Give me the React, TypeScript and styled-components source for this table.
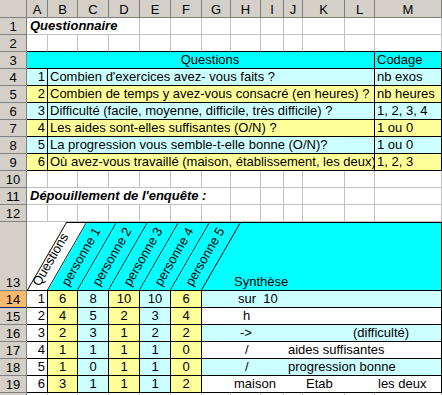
import styled, { createGlobalStyle } from "styled-components";

const CYAN = "#00ffff";
const LIGHT = "#ccffff";
const YELLOW = "#ffff99";
const WHITE = "#ffffff";
const GRID = "#c0c0c0";
const HEAD_BG = "#d4d0c8";
const HEAD_LINE = "#808080";

const COL_WIDTHS = [27, 21, 30, 31, 31, 31, 31, 29, 30, 23, 19, 42, 30, 67];
const LETTERS = ["A", "B", "C", "D", "E", "F", "G", "H", "I", "J", "K", "L", "M"];
const SYNTH_WIDTHS = COL_WIDTHS.slice(7);

const QUESTIONS = [
  { n: 1, text: "Combien d'exercices avez- vous faits ?", code: "nb exos", bg: LIGHT },
  { n: 2, text: "Combien de temps y avez-vous consacré (en heures) ?", code: "nb heures", bg: YELLOW },
  { n: 3, text: "Difficulté (facile, moyenne, difficile, très difficile) ?", code: "1, 2, 3, 4", bg: LIGHT },
  { n: 4, text: "Les aides sont-elles suffisantes (O/N) ?", code: "1 ou 0", bg: YELLOW },
  { n: 5, text: "La progression vous semble-t-elle bonne (O/N)?", code: "1 ou 0", bg: LIGHT },
  { n: 6, text: "Où avez-vous travaillé (maison, établissement, les deux)", code: "1, 2, 3", bg: YELLOW },
];

const PERSON_BG = [YELLOW, LIGHT, YELLOW, LIGHT, YELLOW];

type Piece = { col: number; pad: number; text: string };

const RESULTS: { values: number[]; bg: string; synth: Piece[] }[] = [
  { values: [6, 8, 10, 10, 6], bg: LIGHT, synth: [{ col: 2, pad: 7, text: "sur  10" }] },
  { values: [4, 5, 2, 3, 4], bg: WHITE, synth: [{ col: 2, pad: 12, text: "h" }] },
  {
    values: [2, 3, 1, 2, 2],
    bg: LIGHT,
    synth: [
      { col: 2, pad: 9, text: "->" },
      { col: 6, pad: 8, text: "(difficulté)" },
    ],
  },
  {
    values: [1, 1, 1, 1, 0],
    bg: WHITE,
    synth: [
      { col: 2, pad: 14, text: "/" },
      { col: 4, pad: 4, text: "aides suffisantes" },
    ],
  },
  {
    values: [1, 0, 1, 1, 0],
    bg: LIGHT,
    synth: [
      { col: 2, pad: 14, text: "/" },
      { col: 4, pad: 4, text: "progression bonne" },
    ],
  },
  {
    values: [3, 1, 1, 1, 2],
    bg: WHITE,
    synth: [
      { col: 2, pad: 3, text: "maison" },
      { col: 5, pad: 3, text: "Etab" },
      { col: 7, pad: 3, text: "les deux" },
    ],
  },
];

const GlobalStyle = createGlobalStyle`
  html, body {
    margin: 0;
    padding: 0;
    background: #ffffff;
    overflow: hidden;
  }
`;

const Sheet = styled.div`
  display: grid;
  grid-template-columns: ${COL_WIDTHS.map((w) => `${w}px`).join(" ")};
  grid-template-rows: 18px repeat(12, 17px) 69px repeat(7, 17px);
  font-family: "Liberation Sans", Arial, sans-serif;
  font-size: 13px;
  color: #000;
`;

const Corner = styled.div`
  box-sizing: border-box;
  background: ${HEAD_BG};
  border-right: 1px solid ${HEAD_LINE};
  border-bottom: 1px solid ${HEAD_LINE};
`;

const ColHead = styled.div`
  box-sizing: border-box;
  background: ${HEAD_BG};
  border-right: 1px solid ${HEAD_LINE};
  border-bottom: 1px solid ${HEAD_LINE};
  text-align: center;
  line-height: 17px;
  padding-top: 1px;
`;

const RowHead = styled.div<{ $active?: boolean }>`
  box-sizing: border-box;
  background: ${(p) => (p.$active ? "#f8b86e" : HEAD_BG)};
  border-right: 1px solid ${HEAD_LINE};
  border-bottom: 1px solid ${(p) => (p.$active ? "#0a246a" : HEAD_LINE)};
  display: flex;
  align-items: flex-end;
  justify-content: center;
  line-height: 14px;
`;

const Cell = styled.div<{
  $span?: number;
  $bg?: string;
  $align?: "left" | "right" | "center";
  $right?: boolean;
  $bottom?: boolean;
}>`
  grid-column: span ${(p) => p.$span ?? 1};
  box-sizing: border-box;
  background: ${(p) => p.$bg ?? WHITE};
  border-right: 1px solid ${(p) => (p.$right ? "#000" : p.$bg ? p.$bg : GRID)};
  border-bottom: 1px solid ${(p) => (p.$bottom ? "#000" : p.$bg ? p.$bg : GRID)};
  text-align: ${(p) => p.$align ?? "left"};
  padding: 0 2px;
  line-height: 16px;
  white-space: pre;
  overflow: visible;
`;

const Title = styled(Cell)`
  font-weight: bold;
  font-style: italic;
  padding-left: 3px;
`;

const HeadingCell = styled(Cell)`
  padding-left: 21px;
`;

const Band = styled.div`
  grid-column: span 13;
  box-sizing: border-box;
  display: flex;
  background: ${WHITE};
  border-right: 1px solid #000;
  border-bottom: 1px solid #000;
`;

const SlantCell = styled.div<{ $w: number; $bg: string; $first?: boolean }>`
  flex: 0 0 ${(p) => p.$w}px;
  width: ${(p) => p.$w}px;
  min-width: 0;
  box-sizing: border-box;
  background: ${(p) => p.$bg};
  border-top: 1px solid #000;
  border-right: 1px solid #000;
  border-left: ${(p) => (p.$first ? "1px solid #000" : "none")};
  transform: skewX(-30deg);
  transform-origin: 0 100%;
  display: flex;
  align-items: flex-end;
  padding: 0 0 2px ${(p) => p.$w - 9}px;
`;

const SlantLabel = styled.span`
  display: block;
  flex: none;
  white-space: nowrap;
  line-height: 13px;
  transform-origin: 0 100%;
  transform: skewX(30deg) rotate(-60deg);
`;

const SynthHead = styled.div`
  flex: 1;
  background: ${CYAN};
  border-top: 1px solid #000;
  display: flex;
  align-items: flex-end;
  padding-left: 32px;
  line-height: 16px;
`;

const SynthRow = styled(Cell)`
  display: grid;
  grid-template-columns: ${SYNTH_WIDTHS.map((w) => `${w}px`).join(" ")};
  padding: 0;
`;

const SynthPiece = styled.span<{ $col: number; $pad: number }>`
  grid-column: ${(p) => p.$col};
  grid-row: 1;
  padding-left: ${(p) => p.$pad}px;
  white-space: pre;
`;

const blanks = (count: number, bottom = false) =>
  Array.from({ length: count }, (_, i) => <Cell key={`b${i}`} $bottom={bottom} />);

export default function App() {
  return (
    <>
      <GlobalStyle />
      <Sheet>
        <Corner />
        {LETTERS.map((l) => (
          <ColHead key={l}>{l}</ColHead>
        ))}

        <RowHead>1</RowHead>
        <Title $span={4}>Questionnaire</Title>
        {blanks(9)}

        <RowHead>2</RowHead>
        {blanks(13, true)}

        <RowHead>3</RowHead>
        <HeadingCell $span={12} $bg={CYAN} $align="center" $right $bottom>
          Questions
        </HeadingCell>
        <Cell $bg={CYAN} $right $bottom>
          Codage
        </Cell>

        {QUESTIONS.map((q) => [
          <RowHead key={`h${q.n}`}>{q.n + 3}</RowHead>,
          <Cell key={`n${q.n}`} $bg={q.bg} $align="right" $right $bottom>
            {q.n}
          </Cell>,
          <Cell key={`t${q.n}`} $span={11} $bg={q.bg} $right $bottom>
            {q.text}
          </Cell>,
          <Cell key={`c${q.n}`} $bg={q.bg} $right $bottom>
            {q.code}
          </Cell>,
        ])}

        <RowHead>10</RowHead>
        {blanks(13)}

        <RowHead>11</RowHead>
        <Title $span={7}>Dépouillement de l'enquête :</Title>
        {blanks(6)}

        <RowHead>12</RowHead>
        {blanks(13)}

        <RowHead>13</RowHead>
        <Band>
          <SlantCell $w={21} $bg={WHITE} $first>
            <SlantLabel>Questions</SlantLabel>
          </SlantCell>
          {PERSON_BG.map((_, i) => (
            <SlantCell key={i} $w={COL_WIDTHS[i + 2]} $bg={CYAN}>
              <SlantLabel>personne {i + 1}</SlantLabel>
            </SlantCell>
          ))}
          <SynthHead>Synthèse</SynthHead>
        </Band>

        {RESULTS.map((r, i) => [
          <RowHead key={`rh${i}`} $active={i === 0}>
            {i + 14}
          </RowHead>,
          <Cell key={`rq${i}`} $align="right" $right $bottom>
            {i + 1}
          </Cell>,
          ...r.values.map((v, j) => (
            <Cell key={`rv${i}-${j}`} $bg={PERSON_BG[j]} $align="center" $right $bottom>
              {v}
            </Cell>
          )),
          <SynthRow key={`rs${i}`} $span={7} $bg={r.bg} $right $bottom>
            {r.synth.map((p) => (
              <SynthPiece key={p.text + p.col} $col={p.col} $pad={p.pad}>
                {p.text}
              </SynthPiece>
            ))}
          </SynthRow>,
        ])}

        <RowHead />
        {blanks(13)}
      </Sheet>
    </>
  );
}
